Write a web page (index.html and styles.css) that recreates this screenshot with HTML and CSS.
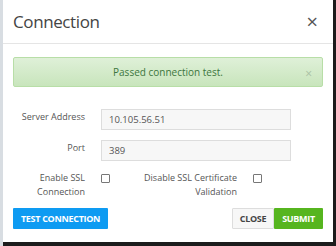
FILE: index.html
```html
<!DOCTYPE html>
<html lang="en">
<head>
<meta charset="UTF-8" />
<title>Connection</title>
<link rel="stylesheet" href="styles.css">
</head>
<body>
  <div class="modal">
    <div class="modal-header">
      <h2>Connection</h2>
      <span class="close">&times;</span>
    </div>
    <div class="modal-body">
      <div class="alert">
        Passed connection test.
        <span class="alert-close">&times;</span>
      </div>
      <div class="form-row">
        <label>Server Address</label>
        <input type="text" value="10.105.56.51" />
      </div>
      <div class="form-row">
        <label>Port</label>
        <input type="text" value="389" />
      </div>
      <div class="check-row">
        <label>Enable SSL<br>Connection</label>
        <span class="box"></span>
        <label class="wide">Disable SSL Certificate<br>Validation</label>
        <span class="box"></span>
      </div>
    </div>
    <div class="modal-footer">
      <button class="btn btn-blue">TEST CONNECTION</button>
      <div class="right">
        <button class="btn btn-light">CLOSE</button>
        <button class="btn btn-green">SUBMIT</button>
      </div>
    </div>
  </div>
</body>
</html>
```

FILE: styles.css
```css
body {
  margin: 0;
  padding: 0 3px 4px 3px;
  height: 246px;
  box-sizing: border-box;
  background: linear-gradient(to right, #d8dde2 3px, #1c1c1c 3px);
  font-family: "Open Sans", sans-serif;
  color: #555;
  overflow: hidden;
}

.modal {
  background: #fff;
  height: 242px;
  box-sizing: border-box;
}

.modal-header {
  height: 44px;
  border-bottom: 1px solid #e5e5e5;
  display: flex;
  align-items: center;
  justify-content: space-between;
  padding: 0 15px 0 10px;
  box-sizing: border-box;
}
.modal-header h2 {
  margin: 0;
  font-size: 17px;
  letter-spacing: -0.4px;
  font-weight: 400;
  color: #444;
}
.close {
  font-size: 20px;
  color: #555;
  line-height: 1;
}

.modal-body {
  padding: 13px 10px 0 10px;
}

.alert {
  position: relative;
  height: 30px;
  box-sizing: border-box;
  border: 1px solid #b8dea7;
  border-radius: 2px;
  background: linear-gradient(#dff0d8, #c8e5bc);
  color: #3c763d;
  font-size: 10px;
  display: flex;
  align-items: center;
  justify-content: center;
  margin-bottom: 22px;
}
.alert-close {
  position: absolute;
  right: 10px;
  top: 7px;
  font-size: 12px;
  color: #a9bfa3;
}

.form-row {
  display: flex;
  align-items: flex-start;
  margin-bottom: 10px;
  font-size: 9px;
}
.form-row label {
  width: 72px;
  text-align: right;
  padding-top: 1px;
  margin-right: 16px;
}
.form-row input {
  width: 190px;
  height: 21px;
  box-sizing: border-box;
  border: 1px solid #ddd;
  background: #f7f7f7;
  font-family: "Open Sans", sans-serif;
  font-size: 9.5px;
  color: #555;
  padding: 0 7px;
  outline: none;
}

.check-row {
  display: flex;
  align-items: flex-start;
  font-size: 9px;
  line-height: 14px;
  margin-top: 2px;
}
.check-row label {
  width: 72px;
  text-align: right;
  margin-right: 16px;
}
.check-row label.wide {
  width: 100px;
  margin-left: 27px;
}
.box {
  width: 7px;
  height: 7px;
  border: 1px solid #777;
  border-radius: 1px;
  margin-top: 3px;
}

.modal-footer {
  display: flex;
  justify-content: space-between;
  padding: 9px 10px 0 10px;
}
.right {
  display: flex;
}
.btn {
  height: 21px;
  border: 1px solid transparent;
  font-family: "Open Sans", sans-serif;
  font-weight: 700;
  font-size: 9px;
  letter-spacing: -0.3px;
  white-space: nowrap;
  padding: 0;
  border-radius: 1px;
}
.btn-blue {
  background: #0e9bf2;
  color: #fff;
  width: 95px;
}
.btn-light {
  background: #f7f7f7;
  border-color: #ddd;
  color: #444;
  width: 42px;
}
.btn-green {
  background: #56b51f;
  color: #fff;
  width: 49px;
}
```
